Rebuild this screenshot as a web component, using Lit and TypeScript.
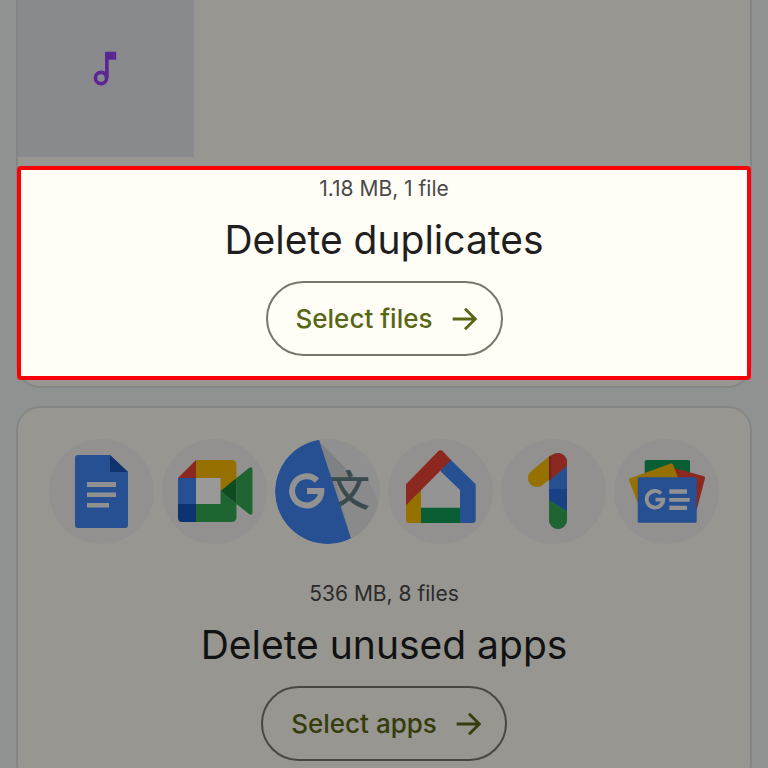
import { LitElement, html, css, svg } from "lit";
import { customElement } from "lit/decorators.js";

const arrow = html`<svg class="arrow" viewBox="0 0 24 24" aria-hidden="true">
  <path d="M4 12H19M12.7 4.7L20 12L12.7 19.3" fill="none" stroke="currentColor" stroke-width="2" stroke-linejoin="miter"/>
</svg>`;

const docs = svg`
  <path fill="#4285f4" d="M29 16H61L79 33V86a3 3 0 0 1-3 3H29a3 3 0 0 1-3-3V19a3 3 0 0 1 3-3z"/>
  <path fill="#1a56b8" d="M61 16L79 33H61z"/>
  <path fill="#f1f1f1" d="M38 43H67v5H38zM38 53.5H67v4.5H38zM38 64H60v4.500H38z"/>`;

const meet = svg`
  <path fill="#fff" d="M33 39H59V65H33z"/>
  <path fill="#ea4335" d="M34 21V39H16z"/>
  <path fill="#4285f4" d="M16 39H34V65H16z"/>
  <path fill="#1557bf" d="M16 65H34V83H20a4 4 0 0 1-4-4z"/>
  <path fill="#fbbc04" d="M34 21H70a4.500 4.500 0 0 1 4.500 4.500V40L58.500 52V39H34z"/>
  <path fill="#34a853" d="M34 65H58.500V52L74.500 65V78.500a4.500 4.500 0 0 1-4.500 4.500H34z"/>
  <path fill="#34a853" d="M74.500 39L87 29Q90.500 27 90.500 31V73Q90.500 77 87 75L74.500 65z"/>
  <path fill="#188038" d="M58.500 52L74.500 39V65z"/>`;

const translate = svg`
  <circle cx="52.500" cy="52.500" r="52.500" fill="#f1f1f1"/>
  <path fill="#d6d7d9" d="M45 3L103 62A52.500 52.500 0 0 1 76 99.500z"/>
  <path fill="#e6e7e8" d="M60 39L93 39L103.500 63A52.500 52.500 0 0 1 76 99.500z"/>
  <text class="han" x="53" y="67" font-size="42">文</text>
  <path fill="#4285f4" d="M44 .7A52.500 52.500 0 1 0 76 99.500z"/>
  <path fill="none" stroke="#f4f4f4" stroke-width="6" d="M42 41.500A14.600 14.600 0 1 0 46.300 52H32"/>`;

const home = svg`
  <path fill="#f7f7f7" d="M52 30L74 50V70H32V50z"/>
  <path fill="#fbbc04" d="M18 62L33 48V84H21a3 3 0 0 1-3-3z"/>
  <path fill="#0f9d58" d="M33 68.700H73V84H33z"/>
  <path fill="#4285f4" d="M62 20L87.700 45.300V81a3 3 0 0 1-3 3H72V51L52.300 32z"/>
  <path fill="#ea4335" d="M18 45.300L50 12.500Q52.500 10 55 12.500L63 21L18 66.300z"/>`;

const one = svg`
  <clipPath id="stem"><rect x="48" y="14" width="18" height="76" rx="9"/></clipPath>
  <path d="M36 39L55 23.500" stroke="#fbbc04" stroke-width="18" stroke-linecap="round"/>
  <g clip-path="url(#stem)">
    <path fill="#4285f4" d="M48 14H66V90H48z"/>
    <path fill="#2b6fe0" d="M48 50H66V75H48z"/>
    <path fill="#ea4335" d="M48 14H66V27L48 41.700z"/>
    <path fill="#34a853" d="M48 61L66 72V90H48z"/>
  </g>
  <path fill="#b5382b" d="M48 18L50 16V40L48 41.700z"/>`;

const news = svg`
  <rect x="30.700" y="21" width="45.300" height="30" rx="1.500" fill="#0f9d58"/>
  <path fill="#ea4335" d="M61 29.300L90 37.200Q91.500 37.700 91 39.300L82.700 71L60 60z"/>
  <path fill="#fbbc04" d="M16 39.300L57 24.500Q58.500 24 59 25.500L68 50L23.700 64.300L15 41Q14.700 39.800 16 39.300z"/>
  <rect x="23.700" y="38.300" width="59" height="45.400" rx="1.500" fill="#4285f4"/>
  <path fill="#f4f4f4" d="M55.300 50.300H73V54.700H55.300zM55.300 59H75.700V62.800H55.300zM55.300 66.700H73V71H55.300z"/>
  <path fill="none" stroke="#f4f4f4" stroke-width="3.800" d="M47 54.500A8.300 8.300 0 1 0 49.300 60.700H41.500"/>`;

const apps = [
  { name: "Docs", art: docs },
  { name: "Meet", art: meet },
  { name: "Translate", art: translate },
  { name: "Home", art: home },
  { name: "One", art: one },
  { name: "News", art: news },
];

@customElement("app-root")
export class AppRoot extends LitElement {
  static styles = css`
    :host {
      display: block;
      height: 100vh;
      overflow: hidden;
      background: #eef3f1;
      color: #1f1f1f;
      font-family: Inter, "Liberation Sans", sans-serif;
    }
    * { box-sizing: border-box; }
    main {
      display: flex;
      flex-direction: column;
      gap: 18px;
      padding: 0 16px;
    }
    .card {
      display: flex;
      flex-direction: column;
      border: 2px solid #dadfdd;
      border-radius: 24px;
      background: #fcfaf0;
    }
    .first {
      border-top: 0;
      border-top-left-radius: 0;
      border-top-right-radius: 0;
      padding-bottom: 6px;
    }
    .tile {
      display: grid;
      place-items: center;
      width: 176px;
      height: 176px;
      margin: -19px 0 9px;
      background: #e4e6ec;
    }
    .note { width: 36px; height: 36px; }
    .panel {
      display: flex;
      flex-direction: column;
      align-items: center;
    }
    .spotlight {
      position: relative;
      z-index: 1;
      margin: 0 -1px;
      padding: 5px 0 20px;
      border: 4px solid #fb0007;
      border-radius: 4px;
      background: #fffdf5;
      box-shadow: 0 0 0 100vmax rgb(0 0 0 / 40%);
    }
    .meta {
      margin: 0;
      font-size: 21px;
      line-height: 28px;
      color: #49494a;
    }
    h2 {
      margin: 12px 0 16px;
      font-size: 39px;
      line-height: 50px;
      font-weight: 400;
    }
    button {
      display: flex;
      align-items: center;
      gap: 14px;
      height: 75px;
      padding: 0 20px 0 28px;
      border: 2px solid #79766b;
      border-radius: 38px;
      background: transparent;
      color: #596616;
      font: 500 26px/32px Inter, "Liberation Sans", sans-serif;
    }
    .arrow { width: 34px; height: 34px; }
    .apps {
      display: flex;
      justify-content: center;
      gap: 8px;
      margin: 0;
      padding: 31px 0 36px;
      list-style: none;
    }
    .apps li { display: flex; }
    .app {
      width: 105px;
      height: 105px;
      border-radius: 50%;
      background: #f3f2f1;
    }
    .han {
      font-family: "Noto Sans CJK SC", sans-serif;
      font-weight: 500;
      fill: #607d80;
    }
    .last { padding-bottom: 24px; }
  `;

  render() {
    return html`<main>
      <section class="card first">
        <div class="tile">
          <svg class="note" viewBox="0 0 36 36" role="img" aria-label="Audio file">
            <circle cx="13" cy="27" r="5.600" fill="none" stroke="#9840f2" stroke-width="3.600"/>
            <path fill="#9840f2" d="M17 .7H28.200V8.700H20.700V27H17z"/>
          </svg>
        </div>
        <div class="panel spotlight">
          <p class="meta">1.18 MB, 1 file</p>
          <h2>Delete duplicates</h2>
          <button type="button">Select files ${arrow}</button>
        </div>
      </section>
      <section class="card last">
        <ul class="apps">
          ${apps.map(
            (a) => html`<li>
              <svg class="app" viewBox="0 0 105 105" role="img" aria-label=${a.name}>${a.art}</svg>
            </li>`
          )}
        </ul>
        <div class="panel">
          <p class="meta">536 MB, 8 files</p>
          <h2>Delete unused apps</h2>
          <button type="button">Select apps ${arrow}</button>
        </div>
      </section>
    </main>`;
  }
}
